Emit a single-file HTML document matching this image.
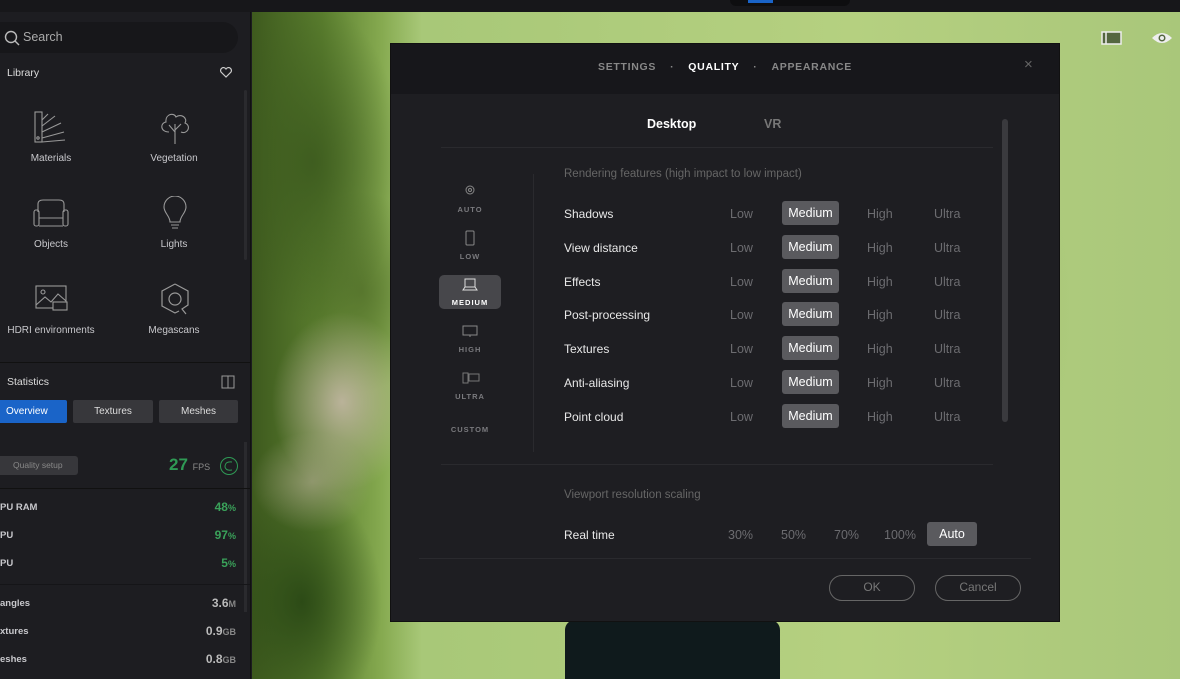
<!DOCTYPE html>
<html><head><meta charset="utf-8"><style>
*{margin:0;padding:0;box-sizing:border-box}
body{width:1180px;height:679px;overflow:hidden;background:#1c1c20;font-family:"Liberation Sans",sans-serif;position:relative;color:#ddd}
.abs{position:absolute}
.vp{left:252px;top:12px;width:928px;height:667px;background:
radial-gradient(ellipse 70px 90px at 90px 390px,rgba(200,185,170,.85),transparent),
radial-gradient(ellipse 60px 50px at 60px 470px,rgba(180,170,150,.6),transparent),
radial-gradient(ellipse 90px 160px at 60px 150px,rgba(60,90,30,.9),transparent),
radial-gradient(ellipse 80px 120px at 50px 590px,rgba(40,70,20,.9),transparent),
radial-gradient(ellipse 70px 100px at 110px 280px,rgba(80,110,40,.8),transparent),
radial-gradient(ellipse 120px 260px at 700px 300px,#9cbb68,transparent),
linear-gradient(90deg,#3e5a1e 0,#5a7e2e 70px,#86aa50 130px,#a8c878 170px,#b5d080 600px,#a9c77a 928px)}
.top{left:0;top:0;width:1180px;height:12px;background:#17171a}
.side{left:0;top:12px;width:251px;height:667px;background:#1d1d21;border-right:1px solid #111}
.modal{left:390px;top:43px;width:670px;height:579px;background:#1e1e22;border:1px solid #111}
.mh{height:50px;background:#17171b;display:flex;justify-content:center;align-items:center;font-size:10.5px;letter-spacing:.7px;font-weight:bold;color:#888;padding-bottom:4px}
.row{position:absolute;left:173px;font-size:12px;color:#e8e8e8}
.opt{position:absolute;font-size:12.5px;color:#6c6c70}
.sel{position:absolute;background:#5a5a5e;color:#fff;border-radius:3px;font-size:12.5px;text-align:center;line-height:24px}
.lv{position:absolute;left:48px;width:62px;text-align:center;font-size:7.5px;letter-spacing:1px;font-weight:bold;color:#7a7a7e}
.lib{position:absolute;font-size:10px;color:#c8c8cc;text-align:center;width:120px}
.st{position:absolute;font-size:9.5px;color:#c8c8cc;font-weight:bold}
.sv{position:absolute;right:14px;font-size:12px;color:#bbb;font-weight:bold}
.g{color:#3aa25a}
</style></head><body>
<div class="abs vp"></div>
<div class="abs" style="left:565px;top:620px;width:215px;height:59px;background:#0f1a1c;border-radius:10px 10px 0 0"></div>
<div class="abs top"></div>
<div class="abs" style="left:730px;top:0;width:120px;height:6px;background:#0e0e10;border-radius:0 0 6px 6px"></div>
<div class="abs" style="left:748px;top:0;width:25px;height:3px;background:#1a64c8"></div>
<svg class="abs" style="left:1101px;top:31px" width="22" height="14"><rect x="1" y="1" width="19" height="12" fill="#546640" stroke="#eee" stroke-width="1.5"/><line x1="5" y1="1" x2="5" y2="13" stroke="#eee" stroke-width="1.5"/></svg>
<svg class="abs" style="left:1151px;top:31px" width="22" height="14"><path d="M1 7 Q11 -3 21 7 Q11 17 1 7Z" fill="#eee"/><circle cx="11" cy="7" r="3.5" fill="#546640"/><circle cx="11" cy="7" r="2" fill="#eee"/></svg>

<div class="abs side">
 <div class="abs" style="left:0;top:10px;width:238px;height:31px;background:#17171a;border-radius:0 16px 16px 0"></div>
 <svg class="abs" style="left:4px;top:18px" width="16" height="16"><circle cx="7" cy="7" r="5.5" fill="none" stroke="#bbb" stroke-width="1.4"/><line x1="11" y1="11" x2="15" y2="15" stroke="#bbb" stroke-width="1.4"/></svg>
 <div class="abs" style="left:23px;top:18px;font-size:12.5px;color:#aaa">Search</div>
 <div class="abs" style="left:7px;top:55px;font-size:10.5px;color:#ddd">Library</div>
 <svg class="abs" style="left:220px;top:55px" width="12" height="11"><path d="M6 10 L1 5 A2.6 2.6 0 0 1 6 2 A2.6 2.6 0 0 1 11 5Z" fill="none" stroke="#ccc" stroke-width="1.2"/></svg>
 <div class="abs" style="left:244px;top:78px;width:3px;height:170px;background:#2a2a2e;border-radius:2px"></div>
 <svg class="abs" style="left:33px;top:98px" width="36" height="36" fill="none" stroke="#999" stroke-width="1.1"><rect x="2" y="2" width="7" height="30"/><path d="M9 32 L32 30 M9 28 L31 22 M9 22 L28 13 M9 16 L22 6 M9 10 L15 4"/><circle cx="5" cy="28" r="1.2"/></svg>
 <svg class="abs" style="left:157px;top:98px" width="36" height="36" fill="none" stroke="#999" stroke-width="1.1"><path d="M12 22 C3 22 3 13 9 12 C8 4 17 2 19 7 C24 3 31 8 28 13 C35 16 30 25 24 22 M18 34 V14 M18 22 L12 15 M18 20 L24 14"/></svg>
 <div class="lib" style="left:-9px;top:141px">Materials</div>
 <div class="lib" style="left:114px;top:141px">Vegetation</div>
 <svg class="abs" style="left:33px;top:186px" width="36" height="36" fill="none" stroke="#999" stroke-width="1.1"><path d="M5 14 V6 Q5 2 10 2 H26 Q31 2 31 6 V14"/><rect x="1" y="12" width="5" height="16" rx="2"/><rect x="30" y="12" width="5" height="16" rx="2"/><path d="M6 20 H30 M6 28 H30"/></svg>
 <svg class="abs" style="left:157px;top:184px" width="36" height="36" fill="none" stroke="#999" stroke-width="1.1"><path d="M13 26 C13 20 7 17 7 11 A11 11 0 0 1 29 11 C29 17 23 20 23 26Z M14 29 H22 M15 32 H21"/></svg>
 <div class="lib" style="left:-9px;top:227px">Objects</div>
 <div class="lib" style="left:114px;top:227px">Lights</div>
 <svg class="abs" style="left:33px;top:271px" width="36" height="36" fill="none" stroke="#999" stroke-width="1.1"><rect x="3" y="3" width="30" height="22"/><circle cx="10" cy="9" r="2"/><path d="M3 22 L12 14 L18 19 L25 11 L33 18"/><rect x="20" y="19" width="14" height="8" fill="#1d1d21"/></svg>
 <svg class="abs" style="left:157px;top:269px" width="36" height="36" fill="none" stroke="#999" stroke-width="1.2"><path d="M18 3 L31 10 V24 L25 28 L29 33 M18 3 L5 10 V25 L18 32 L22 30"/><circle cx="18" cy="18" r="6"/></svg>
 <div class="lib" style="left:-9px;top:313px">HDRI environments</div>
 <div class="lib" style="left:114px;top:313px">Megascans</div>
 <div class="abs" style="left:0;top:350px;width:250px;height:1px;background:#111"></div>
 <div class="abs" style="left:7px;top:364px;font-size:10.5px;color:#ddd">Statistics</div>
 <svg class="abs" style="left:221px;top:363px" width="14" height="14" fill="none" stroke="#999"><rect x="1" y="1" width="12" height="12"/><line x1="7" y1="1" x2="7" y2="13"/></svg>
 <div class="abs" style="left:0;top:388px;width:67px;height:23px;background:#1a64c8;border-radius:0 2px 2px 0;font-size:10px;color:#fff;line-height:23px;padding-left:6px">Overview</div>
 <div class="abs" style="left:73px;top:388px;width:80px;height:23px;background:#37373b;border-radius:2px;font-size:10px;color:#ddd;line-height:23px;text-align:center">Textures</div>
 <div class="abs" style="left:159px;top:388px;width:79px;height:23px;background:#37373b;border-radius:2px;font-size:10px;color:#ddd;line-height:23px;text-align:center">Meshes</div>
 <div class="abs" style="left:244px;top:430px;width:3px;height:170px;background:#2a2a2e"></div>
 <div class="abs" style="left:0;top:444px;width:78px;height:19px;background:#37373b;border-radius:0 3px 3px 0;font-size:8.5px;color:#888;line-height:19px;padding-left:13px">Quality setup</div>
 <div class="abs" style="left:169px;top:443px;font-size:17px;font-weight:bold;color:#2f9a55">27 <span style="font-size:9px;color:#888;font-weight:normal">FPS</span></div>
 <svg class="abs" style="left:219px;top:444px" width="20" height="20" fill="none" stroke="#2f9a55"><circle cx="10" cy="10" r="8.5"/><path d="M13 6 Q6 5 6 11 Q7 15 13 14"/></svg>
 <div class="abs" style="left:0;top:476px;width:250px;height:1px;background:#111"></div>
 <div class="st" style="left:0;top:490px">PU RAM</div><div class="sv g" style="top:488px">48<span style="font-size:9px">%</span></div>
 <div class="st" style="left:0;top:518px">PU</div><div class="sv g" style="top:516px">97<span style="font-size:9px">%</span></div>
 <div class="st" style="left:0;top:546px">PU</div><div class="sv g" style="top:544px">5<span style="font-size:9px">%</span></div>
 <div class="abs" style="left:0;top:572px;width:250px;height:1px;background:#151518"></div>
 <div class="st" style="left:0;top:586px">angles</div><div class="sv" style="top:584px">3.6<span style="font-size:9px;color:#888">M</span></div>
 <div class="st" style="left:0;top:614px">xtures</div><div class="sv" style="top:612px">0.9<span style="font-size:9px;color:#888">GB</span></div>
 <div class="st" style="left:0;top:642px">eshes</div><div class="sv" style="top:640px">0.8<span style="font-size:9px;color:#888">GB</span></div>
</div>

<div class="abs modal">
 <div class="mh"><span>SETTINGS</span><span style="margin:0 14px">·</span><span style="color:#fff">QUALITY</span><span style="margin:0 14px">·</span><span>APPEARANCE</span></div>
 <div class="abs" style="left:633px;top:12px;color:#666;font-size:15px">×</div>
 <div class="abs" style="left:256px;top:73px;font-size:12.5px;font-weight:bold;color:#fff">Desktop</div>
 <div class="abs" style="left:373px;top:73px;font-size:12.5px;font-weight:bold;color:#777">VR</div>
 <div class="abs" style="left:50px;top:103px;width:552px;height:1px;background:#2a2a2e"></div>
 <div class="abs" style="left:611px;top:75px;width:6px;height:303px;background:#3a3a3e;border-radius:3px"></div>
 <div class="abs" style="left:142px;top:130px;width:1px;height:278px;background:#2a2a2e"></div>
 <svg class="abs" style="left:73px;top:140px" width="12" height="12" fill="none" stroke="#888"><circle cx="6" cy="6" r="4"/><circle cx="6" cy="6" r="1.5"/></svg>
 <div class="lv" style="top:161px">AUTO</div>
 <svg class="abs" style="left:73px;top:186px" width="12" height="16" fill="none" stroke="#888"><rect x="2" y="1" width="8" height="14" rx="1"/></svg>
 <div class="lv" style="top:208px">LOW</div>
 <div class="abs" style="left:48px;top:231px;width:62px;height:34px;background:#47474b;border-radius:5px"></div>
 <svg class="abs" style="left:71px;top:234px" width="16" height="13" fill="none" stroke="#ddd"><rect x="3" y="1" width="10" height="8"/><path d="M1 12 H15 L13 9 H3Z"/></svg>
 <div class="lv" style="top:254px;color:#fff">MEDIUM</div>
 <svg class="abs" style="left:71px;top:281px" width="16" height="13" fill="none" stroke="#888"><rect x="1" y="1" width="14" height="9"/><line x1="8" y1="10" x2="8" y2="12"/></svg>
 <div class="lv" style="top:301px">HIGH</div>
 <svg class="abs" style="left:71px;top:328px" width="18" height="12" fill="none" stroke="#777"><rect x="1" y="1" width="5" height="10"/><rect x="7" y="2" width="10" height="7"/></svg>
 <div class="lv" style="top:348px">ULTRA</div>
 <div class="lv" style="top:381px">CUSTOM</div>
 <div class="abs" style="left:173px;top:124px;font-size:11.5px;color:#666">Rendering features (high impact to low impact)</div>

 <div class="row" style="top:163px">Shadows</div>
 <div class="row" style="top:197px">View distance</div>
 <div class="row" style="top:231px">Effects</div>
 <div class="row" style="top:264px">Post-processing</div>
 <div class="row" style="top:298px">Textures</div>
 <div class="row" style="top:332px">Anti-aliasing</div>
 <div class="row" style="top:366px">Point cloud</div>

 <div class="abs" style="left:50px;top:420px;width:552px;height:1px;background:#2a2a2e"></div>
 <div class="abs" style="left:173px;top:445px;font-size:11.5px;color:#666">Viewport resolution scaling</div>
 <div class="row" style="top:484px">Real time</div>
 <div class="opt" style="left:337px;top:484px">30%</div>
 <div class="opt" style="left:390px;top:484px">50%</div>
 <div class="opt" style="left:443px;top:484px">70%</div>
 <div class="opt" style="left:493px;top:484px">100%</div>
 <div class="sel" style="left:536px;top:478px;width:50px">Auto</div>
 <div class="abs" style="left:28px;top:514px;width:612px;height:1px;background:#2a2a2e"></div>
 <div class="abs" style="left:438px;top:531px;width:86px;height:26px;border:1.5px solid #666;border-radius:13px;font-size:12px;color:#777;text-align:center;line-height:23px">OK</div>
 <div class="abs" style="left:544px;top:531px;width:86px;height:26px;border:1.5px solid #666;border-radius:13px;font-size:12px;color:#777;text-align:center;line-height:23px">Cancel</div>

 <div class="opt" style="left:339px;top:163px">Low</div><div class="sel" style="left:391px;top:157px;width:57px">Medium</div><div class="opt" style="left:476px;top:163px">High</div><div class="opt" style="left:543px;top:163px">Ultra</div>
 <div class="opt" style="left:339px;top:197px">Low</div><div class="sel" style="left:391px;top:191px;width:57px">Medium</div><div class="opt" style="left:476px;top:197px">High</div><div class="opt" style="left:543px;top:197px">Ultra</div>
 <div class="opt" style="left:339px;top:231px">Low</div><div class="sel" style="left:391px;top:225px;width:57px">Medium</div><div class="opt" style="left:476px;top:231px">High</div><div class="opt" style="left:543px;top:231px">Ultra</div>
 <div class="opt" style="left:339px;top:264px">Low</div><div class="sel" style="left:391px;top:258px;width:57px">Medium</div><div class="opt" style="left:476px;top:264px">High</div><div class="opt" style="left:543px;top:264px">Ultra</div>
 <div class="opt" style="left:339px;top:298px">Low</div><div class="sel" style="left:391px;top:292px;width:57px">Medium</div><div class="opt" style="left:476px;top:298px">High</div><div class="opt" style="left:543px;top:298px">Ultra</div>
 <div class="opt" style="left:339px;top:332px">Low</div><div class="sel" style="left:391px;top:326px;width:57px">Medium</div><div class="opt" style="left:476px;top:332px">High</div><div class="opt" style="left:543px;top:332px">Ultra</div>
 <div class="opt" style="left:339px;top:366px">Low</div><div class="sel" style="left:391px;top:360px;width:57px">Medium</div><div class="opt" style="left:476px;top:366px">High</div><div class="opt" style="left:543px;top:366px">Ultra</div>
</div>
</body></html>
